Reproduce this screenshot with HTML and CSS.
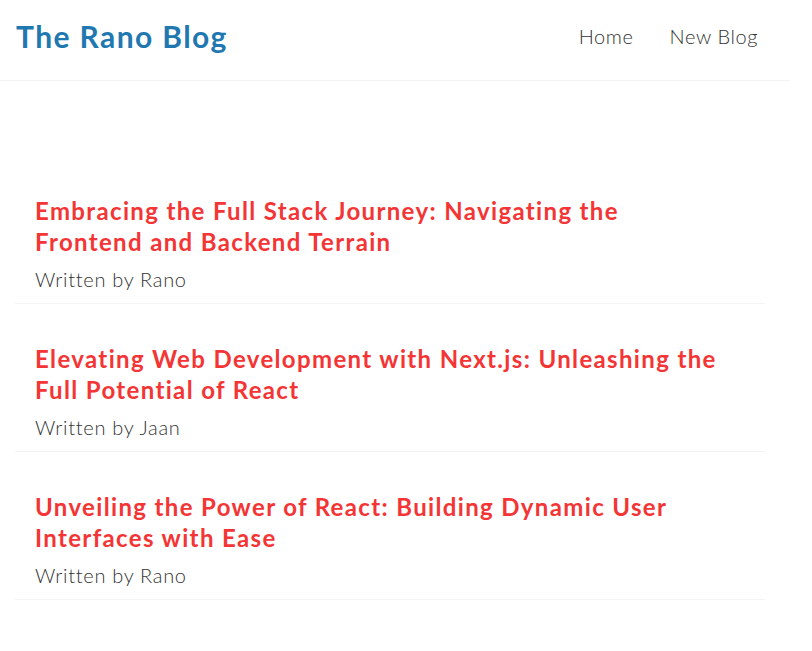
FILE: index.html
```html
<!DOCTYPE html>
<html lang="en">
<head>
<meta charset="utf-8">
<title>The Rano Blog</title>
<link rel="stylesheet" href="styles.css">
</head>
<body>
<div class="app">
  <nav class="navbar">
    <h1 class="brand">The Rano Blog</h1>
    <div class="links">
      <a href="#" class="link">Home</a>
      <a href="#" class="link">New Blog</a>
    </div>
  </nav>
  <main class="content">
    <div class="blog-list">
      <article class="blog-preview">
        <h2 class="blog-title">Embracing the Full Stack Journey: Navigating the Frontend and Backend Terrain</h2>
        <p class="blog-author">Written by Rano</p>
      </article>
      <article class="blog-preview">
        <h2 class="blog-title">Elevating Web Development with Next.js: Unleashing the Full Potential of React</h2>
        <p class="blog-author">Written by Jaan</p>
      </article>
      <article class="blog-preview">
        <h2 class="blog-title">Unveiling the Power of React: Building Dynamic User Interfaces with Ease</h2>
        <p class="blog-author">Written by Rano</p>
      </article>
    </div>
  </main>
</div>
</body>
</html>
```

FILE: styles.css
```css
* { box-sizing: border-box; }
html, body { margin: 0; padding: 0; background: #fff; }
body {
  font-family: "Lato", "Noto Sans", sans-serif;
  color: #333;
}
.app { width: 790px; }
.navbar {
  height: 81px;
  display: flex;
  align-items: center;
  padding: 0 32px 8px 16px;
  border-bottom: 1px solid #f2f2f2;
}
.brand {
  margin: 0;
  font-size: 30px;
  letter-spacing: 1.4px;
  font-weight: 700;
  color: #1f78b0;
  line-height: 1;
}
.links {
  margin-left: auto;
  display: flex;
  gap: 36px;
}
.link {
  font-size: 20px;
  letter-spacing: 0.6px;
  font-weight: 300;
  color: #333;
  text-decoration: none;
}
.content {
  padding: 95px 25px 0 15px;
}
.blog-list {
  display: flex;
  flex-direction: column;
  gap: 20px;
}
.blog-preview {
  padding: 19px 40px 12px 20px;
  border-bottom: 1px solid #f4f4f4;
}
.blog-title {
  margin: 0 0 10px;
  font-size: 24px;
  letter-spacing: 1.35px;
  line-height: 31px;
  font-weight: 700;
  color: #f43535;
}
.blog-author {
  margin: 0;
  font-size: 20px;
  letter-spacing: 0.7px;
  line-height: 24px;
  font-weight: 300;
  color: #333;
}
```
